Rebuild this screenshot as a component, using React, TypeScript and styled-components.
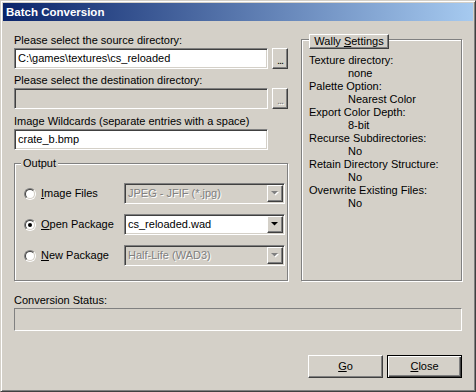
import * as React from "react";
import styled, { createGlobalStyle } from "styled-components";

const face = "#d4d0c8";
const shadow = "#808080";
const darkShadow = "#404040";
const highlight = "#ffffff";

const GlobalStyle = createGlobalStyle`
  * { box-sizing: border-box; }
  body {
    margin: 0;
    background: ${face};
    font-family: "Liberation Sans", Arial, sans-serif;
    font-size: 11px;
    color: #000;
  }
`;

const Window = styled.div`
  width: 476px;
  height: 392px;
  display: flex;
  flex-direction: column;
  background: ${face};
  border: 1px solid;
  border-color: ${face} ${darkShadow} ${darkShadow} ${face};
  box-shadow: inset 1px 1px ${highlight}, inset -1px -1px ${shadow};
  padding: 2px;
`;

const TitleBar = styled.div`
  height: 18px;
  display: flex;
  align-items: center;
  padding-left: 3px;
  background: linear-gradient(to right, #0a246a, #a6caf0);
  color: #fff;
  font-weight: bold;
  font-size: 11.5px;
`;

const Body = styled.div`
  flex: 1;
  display: flex;
  flex-direction: column;
  padding: 13px 11px 0 11px;
`;

const TopGrid = styled.div`
  display: grid;
  grid-template-columns: 274px 161px;
  column-gap: 13px;
  align-items: stretch;
`;

const Column = styled.div`
  display: flex;
  flex-direction: column;
`;

const Label = styled.div<{ $gap?: number }>`
  line-height: 13px;
  height: 13px;
  margin-top: ${(p) => p.$gap ?? 0}px;
  white-space: nowrap;
`;

const FieldRow = styled.div`
  display: flex;
  gap: 4px;
  margin-top: 1px;
`;

const sunken = `
  border: 1px solid;
  border-color: ${shadow} ${highlight} ${highlight} ${shadow};
  box-shadow: inset 1px 1px ${darkShadow}, inset -1px -1px ${face};
`;

const raised = `
  border: 1px solid;
  border-color: ${highlight} ${darkShadow} ${darkShadow} ${highlight};
  box-shadow: inset -1px -1px ${shadow}, inset 1px 1px ${face};
`;

const TextField = styled.div<{ $disabled?: boolean; $width?: number }>`
  ${sunken}
  width: ${(p) => p.$width ?? 254}px;
  height: 21px;
  margin-top: 1px;
  background: ${(p) => (p.$disabled ? face : "#fff")};
  padding: 3px 3px 0 3px;
  line-height: 13px;
  white-space: nowrap;
  overflow: hidden;
`;

const FieldRowInput = styled(TextField)`
  margin-top: 0;
`;

const BrowseButton = styled.div<{ $disabled?: boolean }>`
  ${raised}
  width: 16px;
  height: 21px;
  display: flex;
  align-items: flex-end;
  justify-content: center;
  padding-bottom: 4px;
  font-size: 11px;
  line-height: 8px;
  letter-spacing: -1px;
  color: ${(p) => (p.$disabled ? shadow : "#000")};
  text-shadow: ${(p) => (p.$disabled ? `1px 1px ${highlight}` : "none")};
`;

const GroupBox = styled.div<{ $top: number }>`
  border: 1px solid ${shadow};
  box-shadow: inset 1px 1px ${highlight}, 1px 1px ${highlight};
  margin-top: ${(p) => p.$top}px;
  display: flex;
  flex-direction: column;
`;

const Legend = styled.div`
  align-self: flex-start;
  margin: -7px 0 0 6px;
  padding: 0 2px;
  line-height: 13px;
  background: ${face};
`;

const OptionList = styled.div`
  display: flex;
  flex-direction: column;
  gap: 10px;
  margin-top: 13px;
  padding: 0 0 14px 9px;
`;

const OptionRow = styled.div`
  display: grid;
  grid-template-columns: 12px 78px 161px;
  column-gap: 5px;
  align-items: center;
  height: 21px;
`;

const RadioCircle = styled.div`
  width: 12px;
  height: 12px;
  border-radius: 50%;
  border: 1px solid;
  border-color: ${shadow} ${highlight} ${highlight} ${shadow};
  display: flex;
`;

const RadioInner = styled.div<{ $checked?: boolean }>`
  flex: 1;
  border-radius: 50%;
  border: 1px solid;
  border-color: ${darkShadow} ${face} ${face} ${darkShadow};
  background: #fff;
  display: flex;
  align-items: center;
  justify-content: center;
  &::after {
    content: "";
    width: 4px;
    height: 4px;
    border-radius: 50%;
    background: ${(p) => (p.$checked ? "#000" : "transparent")};
  }
`;

const OptionText = styled.span`
  line-height: 13px;
  white-space: nowrap;
`;

const Mnemonic = styled.span`
  text-decoration: underline;
`;

const ComboBox = styled.div<{ $disabled?: boolean }>`
  ${sunken}
  height: 21px;
  padding: 1px;
  display: flex;
  align-items: center;
  background: ${(p) => (p.$disabled ? face : "#fff")};
`;

const ComboText = styled.span<{ $disabled?: boolean }>`
  flex: 1;
  padding-left: 2px;
  line-height: 13px;
  white-space: nowrap;
  color: ${(p) => (p.$disabled ? shadow : "#000")};
  text-shadow: ${(p) => (p.$disabled ? `1px 1px ${highlight}` : "none")};
`;

const ComboArrow = styled.div`
  ${raised}
  width: 16px;
  height: 17px;
  display: flex;
  align-items: center;
  justify-content: center;
  background: ${face};
`;

const SettingsBox = styled(GroupBox)`
  padding-bottom: 8px;
`;

const SettingsLegend = styled.div`
  ${raised}
  align-self: flex-start;
  margin: -6px 0 0 7px;
  width: 80px;
  height: 15px;
  line-height: 12px;
  text-align: center;
  background: ${face};
`;

const SettingsList = styled.div`
  margin-top: 5px;
  padding-left: 7px;
  line-height: 13px;
`;

const SettingName = styled.div`
  white-space: nowrap;
`;

const SettingValue = styled.div`
  padding-left: 39px;
  white-space: nowrap;
`;

const StatusBox = styled.div`
  margin-top: 1px;
  height: 23px;
  border: 1px solid;
  border-color: ${shadow} ${highlight} ${highlight} ${shadow};
`;

const ButtonRow = styled.div`
  display: flex;
  justify-content: flex-end;
  gap: 4px;
  margin-top: 24px;
`;

const PushButton = styled.div<{ $default?: boolean }>`
  width: 75px;
  height: 23px;
  display: flex;
  align-items: center;
  justify-content: center;
  line-height: 13px;
  border: 1px solid;
  border-color: ${(p) =>
    p.$default ? "#000" : `${highlight} ${darkShadow} ${darkShadow} ${highlight}`};
  box-shadow: ${(p) =>
    p.$default
      ? `inset 1px 1px ${highlight}, inset -1px -1px ${darkShadow}, inset -2px -2px ${shadow}`
      : `inset -1px -1px ${shadow}, inset 1px 1px ${face}`};
`;

const Arrow = ({ disabled }: { disabled?: boolean }) => (
  <svg width="8" height="5" viewBox="0 0 8 5">
    {disabled && <polygon points="1,1 8,1 4.5,4.5" fill="#fff" />}
    <polygon points="0,0 7,0 3.5,3.5" fill={disabled ? shadow : "#000"} />
  </svg>
);

interface IOption {
  mnemonic: string;
  rest: string;
  value: string;
  checked?: boolean;
  disabled?: boolean;
}

const options: IOption[] = [
  { mnemonic: "I", rest: "mage Files", value: "JPEG - JFIF (*.jpg)", disabled: true },
  { mnemonic: "O", rest: "pen Package", value: "cs_reloaded.wad", checked: true },
  { mnemonic: "N", rest: "ew Package", value: "Half-Life (WAD3)", disabled: true }
];

const settings: [string, string][] = [
  ["Texture directory:", "none"],
  ["Palette Option:", "Nearest Color"],
  ["Export Color Depth:", "8-bit"],
  ["Recurse Subdirectories:", "No"],
  ["Retain Directory Structure:", "No"],
  ["Overwrite Existing Files:", "No"]
];

export default function App() {
  return (
    <>
      <GlobalStyle />
      <Window>
        <TitleBar>Batch Conversion</TitleBar>
        <Body>
          <TopGrid>
            <Column>
              <Label>Please select the source directory:</Label>
              <FieldRow>
                <FieldRowInput>C:\games\textures\cs_reloaded</FieldRowInput>
                <BrowseButton>...</BrowseButton>
              </FieldRow>
              <Label $gap={5}>Please select the destination directory:</Label>
              <FieldRow>
                <FieldRowInput $disabled />
                <BrowseButton $disabled>...</BrowseButton>
              </FieldRow>
              <Label $gap={6}>Image Wildcards (separate entries with a space)</Label>
              <TextField>crate_b.bmp</TextField>
              <GroupBox $top={13}>
                <Legend>Output</Legend>
                <OptionList>
                  {options.map((o) => (
                    <OptionRow key={o.mnemonic}>
                      <RadioCircle>
                        <RadioInner $checked={o.checked} />
                      </RadioCircle>
                      <OptionText>
                        <Mnemonic>{o.mnemonic}</Mnemonic>
                        {o.rest}
                      </OptionText>
                      <ComboBox $disabled={o.disabled}>
                        <ComboText $disabled={o.disabled}>{o.value}</ComboText>
                        <ComboArrow>
                          <Arrow disabled={o.disabled} />
                        </ComboArrow>
                      </ComboBox>
                    </OptionRow>
                  ))}
                </OptionList>
              </GroupBox>
            </Column>
            <SettingsBox $top={5}>
              <SettingsLegend>
                Wally <Mnemonic>S</Mnemonic>ettings
              </SettingsLegend>
              <SettingsList>
                {settings.map(([name, value]) => (
                  <React.Fragment key={name}>
                    <SettingName>{name}</SettingName>
                    <SettingValue>{value}</SettingValue>
                  </React.Fragment>
                ))}
              </SettingsList>
            </SettingsBox>
          </TopGrid>
          <Label $gap={13}>Conversion Status:</Label>
          <StatusBox />
          <ButtonRow>
            <PushButton>
              <span>
                <Mnemonic>G</Mnemonic>o
              </span>
            </PushButton>
            <PushButton $default>
              <span>
                <Mnemonic>C</Mnemonic>lose
              </span>
            </PushButton>
          </ButtonRow>
        </Body>
      </Window>
    </>
  );
}
